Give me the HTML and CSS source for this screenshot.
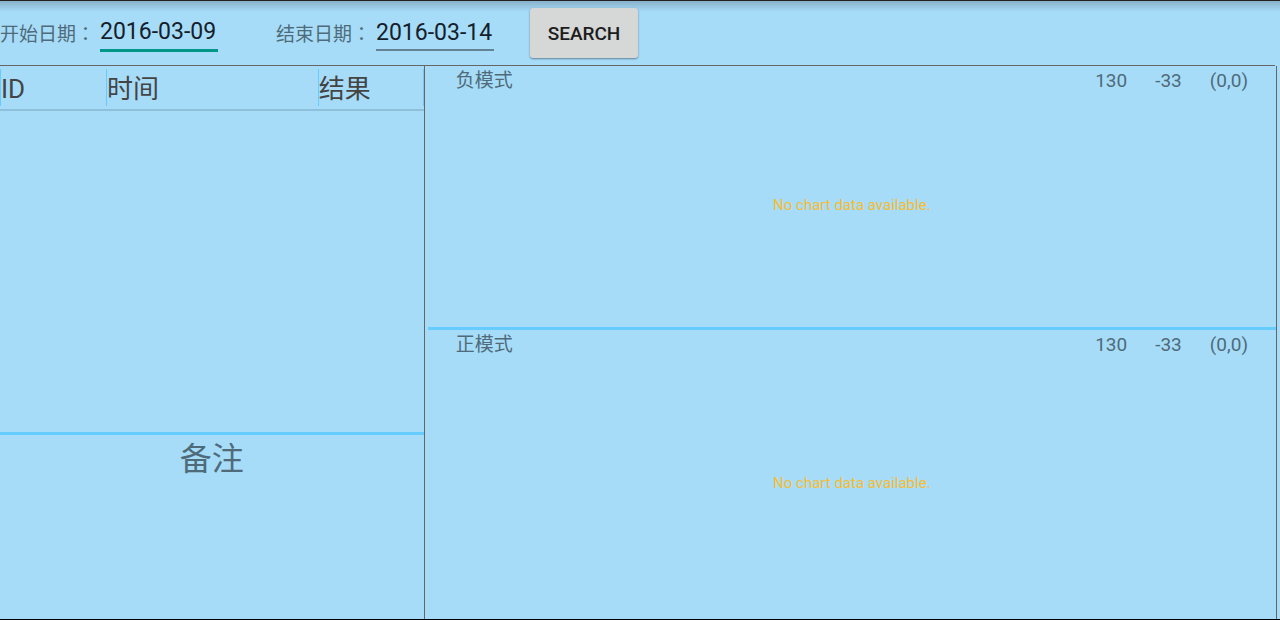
FILE: index.html
```html
<!DOCTYPE html>
<html lang="zh-CN">
<head>
<meta charset="utf-8">
<meta name="viewport" content="width=device-width, initial-scale=1">
<title>Search</title>
<link rel="stylesheet" href="styles.css">
</head>
<body>
<form class="toolbar">
  <label class="toolbar-label" for="start">开始日期<span class="colon" lang="zh-TW">：</span></label>
  <input class="date-input date-input-active" id="start" type="text" value="2016-03-09">
  <label class="toolbar-label toolbar-label-end" for="end">结束日期<span class="colon" lang="zh-TW">：</span></label>
  <input class="date-input" id="end" type="text" value="2016-03-14">
  <button class="search-button" type="button">SEARCH</button>
</form>
<main class="content">
  <section class="records">
    <div class="record-list">
      <table class="record-table">
        <thead>
          <tr><th class="col-id"><div class="cell">ID</div></th><th class="col-time"><div class="cell">时间</div></th><th class="col-result"><div class="cell cell-last">结果</div></th></tr>
        </thead>
      </table>
    </div>
    <div class="notes"><h2 class="notes-title">备注</h2></div>
  </section>
  <section class="charts">
    <article class="chart chart-negative">
      <header class="chart-header">
        <h2 class="chart-title">负模式</h2>
        <span>130</span><span>-33</span><span>(0,0)</span>
      </header>
      <p class="chart-empty">No chart data available.</p>
    </article>
    <article class="chart chart-positive">
      <header class="chart-header">
        <h2 class="chart-title">正模式</h2>
        <span>130</span><span>-33</span><span>(0,0)</span>
      </header>
      <p class="chart-empty">No chart data available.</p>
    </article>
  </section>
</main>
</body>
</html>
```
FILE: styles.css
```css
* { box-sizing: border-box; }

body {
  margin: 0;
  min-height: 100vh;
  display: flex;
  flex-direction: column;
  border-top: 1px solid #222;
  border-bottom: 1px solid #000;
  background: #a6dcf8 linear-gradient(#86adc6, #a6dcf8) 0 0 / 100% 12px no-repeat;
  color: #4f6b7a;
  font-family: Roboto, "Noto Sans CJK SC", sans-serif;
  font-size: 19px;
}

h2, p { margin: 0; font-weight: 400; }

.toolbar {
  display: flex;
  align-items: center;
  height: 65px;
  margin-right: 5px;
  border-bottom: 1px solid #666;
}

.toolbar-label { width: 100px; padding-bottom: 2px; white-space: nowrap; }
.toolbar-label-end { margin-left: 58px; }
.colon { font-family: "Noto Sans CJK TC", sans-serif; }

.date-input {
  width: 118px;
  height: 36px;
  padding: 0;
  border: 0;
  border-bottom: 2px solid #648495;
  border-radius: 0;
  outline: 0;
  background: transparent;
  color: #15202a;
  font: 23px Roboto, sans-serif;
}

.date-input-active { height: 38px; border-bottom: 3px solid #009688; }

.search-button {
  width: 108px;
  height: 50px;
  margin-left: 36px;
  padding: 0;
  border: 0;
  border-radius: 3px;
  background: #d6d7d7;
  box-shadow: 0 1px 2px rgba(0, 0, 0, .4);
  color: #1c1c1c;
  font: 500 19px Roboto, sans-serif;
}

.content {
  flex: 1;
  display: grid;
  grid-template-columns: 1fr 2fr;
  column-gap: 3px;
  padding-right: 3px;
}

.records {
  display: flex;
  flex-direction: column;
  border-right: 1px solid #666;
}

.record-list { flex: 366 1 0; }

.record-table {
  width: 100%;
  border-collapse: collapse;
  table-layout: fixed;
  border-bottom: 2px solid #8fc0da;
}

.record-table th {
  padding: 3px 0;
  color: #444;
  font-size: 26px;
  font-weight: 400;
  line-height: 40px;
  text-align: left;
}

.col-id { width: 25%; }
.col-time { width: 50%; }
.cell { height: 37px; border-left: 1px solid #66ccff; }
.cell-last { border-right: 1px solid #7fc4ec; }

.notes {
  flex: 184 1 0;
  border-top: 3px solid #66ccff;
  text-align: center;
}

.notes-title { font-size: 32px; line-height: 48px; }

.charts {
  display: flex;
  flex-direction: column;
  border-right: 1px solid #666;
}

.chart { display: flex; flex-direction: column; }
.chart-negative { flex: 261 1 0; }
.chart-positive { flex: 289 1 0; border-top: 3px solid #66ccff; }

.chart-header {
  display: flex;
  gap: 28px;
  padding: 0 28px;
  line-height: 30px;
}

.chart-title { margin-right: auto; font-size: 19px; }

.chart-empty {
  flex: 1;
  display: flex;
  align-items: center;
  justify-content: center;
  padding-bottom: 14px;
  color: #f7bd33;
  font-size: 15px;
}
```
